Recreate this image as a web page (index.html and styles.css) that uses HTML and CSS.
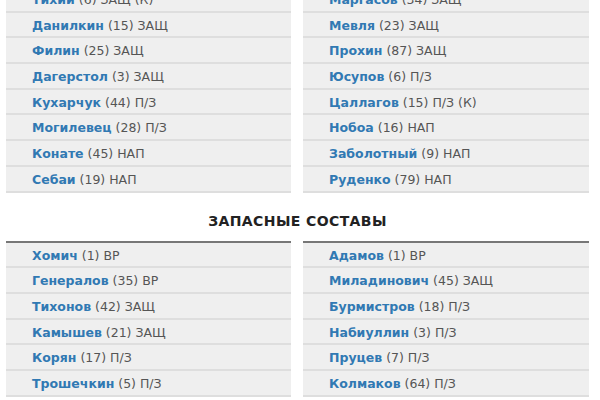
FILE: index.html
```html
<!DOCTYPE html>
<html lang="ru">
<head>
<meta charset="utf-8">
<link rel="stylesheet" href="styles.css">
</head>
<body>
<div class="page">
  <div class="lineups">
    <ul class="team">
      <li><b>Тихий</b> (6) ЗАЩ (К)</li>
      <li><b>Данилкин</b> (15) ЗАЩ</li>
      <li><b>Филин</b> (25) ЗАЩ</li>
      <li><b>Дагерстол</b> (3) ЗАЩ</li>
      <li><b>Кухарчук</b> (44) П/З</li>
      <li><b>Могилевец</b> (28) П/З</li>
      <li><b>Конате</b> (45) НАП</li>
      <li><b>Себаи</b> (19) НАП</li>
    </ul>
    <ul class="team">
      <li><b>Маргасов</b> (34) ЗАЩ</li>
      <li><b>Мевля</b> (23) ЗАЩ</li>
      <li><b>Прохин</b> (87) ЗАЩ</li>
      <li><b>Юсупов</b> (6) П/З</li>
      <li><b>Цаллагов</b> (15) П/З (К)</li>
      <li><b>Нобоа</b> (16) НАП</li>
      <li><b>Заболотный</b> (9) НАП</li>
      <li><b>Руденко</b> (79) НАП</li>
    </ul>
  </div>
  <h2 class="title">Запасные составы</h2>
  <div class="lineups subs">
    <ul class="team">
      <li><b>Хомич</b> (1) ВР</li>
      <li><b>Генералов</b> (35) ВР</li>
      <li><b>Тихонов</b> (42) ЗАЩ</li>
      <li><b>Камышев</b> (21) ЗАЩ</li>
      <li><b>Корян</b> (17) П/З</li>
      <li><b>Трошечкин</b> (5) П/З</li>
    </ul>
    <ul class="team">
      <li><b>Адамов</b> (1) ВР</li>
      <li><b>Миладинович</b> (45) ЗАЩ</li>
      <li><b>Бурмистров</b> (18) П/З</li>
      <li><b>Набиуллин</b> (3) П/З</li>
      <li><b>Пруцев</b> (7) П/З</li>
      <li><b>Колмаков</b> (64) П/З</li>
    </ul>
  </div>
</div>
</body>
</html>
```

FILE: styles.css
```css
html, body {
  margin: 0;
  padding: 0;
  background: #fff;
}
body {
  font-family: "DejaVu Sans", "Open Sans", sans-serif;
  font-size: 12.5px;
  color: #555;
  overflow: hidden;
}
.page {
  margin-top: -13px;
  padding: 0 11px 0 6px;
}
.lineups {
  display: grid;
  grid-template-columns: 285px 286px;
  column-gap: 12px;
}
.team {
  list-style: none;
  margin: 0;
  padding: 0;
}
.team li {
  height: 22.7px;
  padding-top: 1px;
  line-height: 24px;
  padding-left: 26px;
  background: #efefef;
  border-bottom: 2px solid #dedede;
  white-space: nowrap;
}
.team b {
  color: #3179b3;
  font-weight: 700;
}
.title {
  margin: 0;
  height: 48px;
  line-height: 56px;
  text-align: center;
  font-size: 14px;
  font-weight: 600;
  letter-spacing: 0.4px;
  text-transform: uppercase;
  color: #222;
}
.subs .team {
  border-top: 2px solid #777;
}
```
